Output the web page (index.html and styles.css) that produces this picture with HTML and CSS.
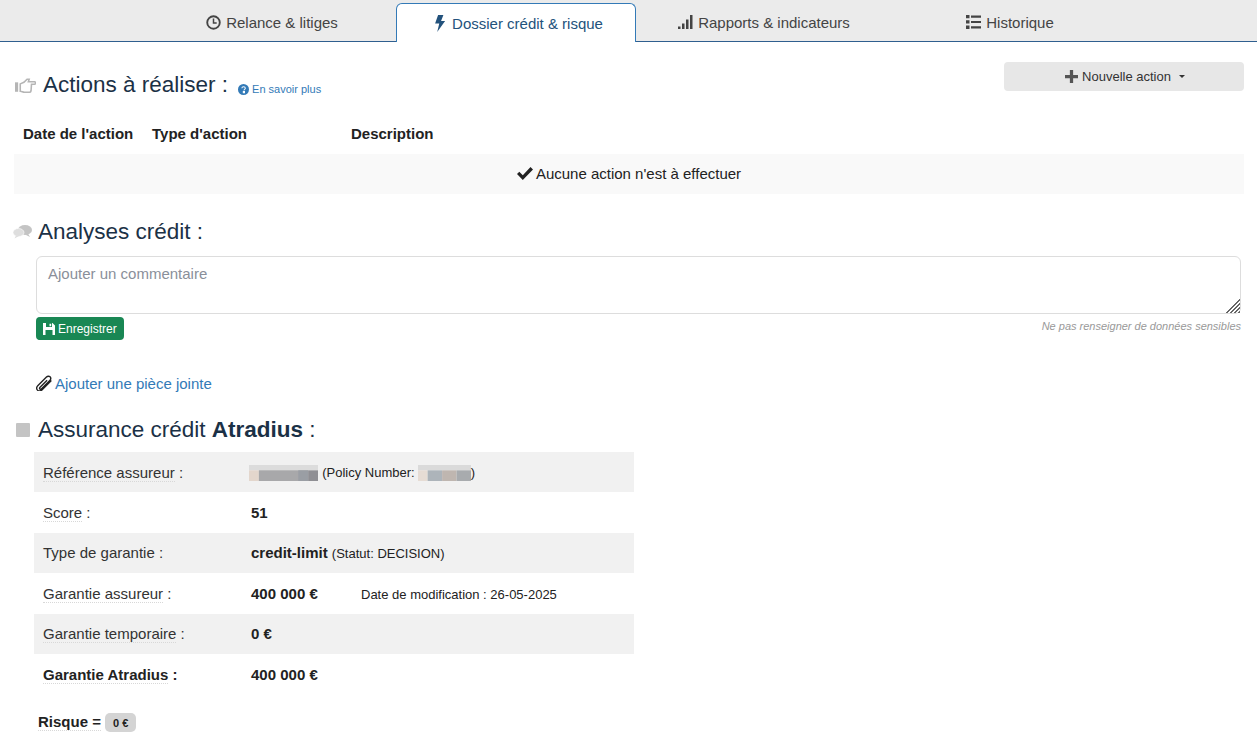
FILE: index.html
```html
<!DOCTYPE html>
<html lang="fr">
<head>
<meta charset="utf-8">
<title>Dossier crédit &amp; risque</title>
<link rel="stylesheet" href="styles.css">
</head>
<body>
<nav class="tabs">
  <a class="tab tab-a tab-first"><svg class="ti" viewBox="0 0 16 16" width="15" height="15"><circle cx="8" cy="8" r="6.700" fill="none" stroke="currentColor" stroke-width="2"/><path d="M8 3.800v4.800h3.400" fill="none" stroke="currentColor" stroke-width="1.600"/></svg>Relance &amp; litiges</a>
  <a class="tab tab-a active"><svg class="ti" viewBox="0 0 12 16" width="14" height="17"><path d="M4.200 0h5L7 5.600h3.800L3.400 16l1.900-8H1.400z" fill="currentColor"/></svg>Dossier crédit &amp; risque</a>
  <a class="tab tab-b"><svg class="ti narrow" viewBox="0 0 15 14" width="15" height="14"><path d="M0 11.500h2.500V14H0zM4 8.500h2.500V14H4zM8 4.500h2.500V14H8zM12 0h2.500v14H12z" fill="currentColor"/></svg>Rapports &amp; indicateurs</a>
  <a class="tab tab-a"><svg class="ti narrow" viewBox="0 0 15 14" width="15" height="14"><path d="M0 0h3.500v3.300H0zM0 5.300h3.500v3.300H0zM0 10.600h3.500v3.300H0zM5 .6h10v2.200H5zM5 5.900h10v2.200H5zM5 11.200h10v2.200H5z" fill="currentColor"/></svg>Historique</a>
</nav>

<main class="page">
  <section class="actions">
    <div class="actions-head">
      <h2 class="title title-actions">
        <svg class="hicon" viewBox="0 0 20 15" width="21" height="16"><path d="M0 4h3v9H0z" fill="#b5b5b5"/><path d="M5 5.500 8.500 4l3-3h2l-.8 2.500h6c1 0 1 2.300 0 2.300h-3l-.4 6.200c-.2 1-.8 1.500-1.600 1.500H9c-1.500 0-2.500-1-4-1z" fill="none" stroke="#b5b5b5" stroke-width="1.500"/></svg>
        <span>Actions à réaliser :</span>
        <a class="more"><svg viewBox="0 0 12 12" width="11" height="11"><circle cx="6" cy="6" r="6" fill="#337ab7"/><path d="M4.200 4.600c0-2.200 3.800-2.200 3.800 0 0 1.300-1.500 1.200-1.500 2.400M5.800 8.200h1.300v1.300H5.800z" fill="none" stroke="#fff" stroke-width="1.100"/></svg> En savoir plus</a>
      </h2>
      <button class="new-action"><svg viewBox="0 0 12 12" width="13" height="13"><path d="M4.500 0h3v4.500H12v3H7.500V12h-3V7.500H0v-3h4.500z" fill="#555"/></svg> Nouvelle action <span class="caret"></span></button>
    </div>
    <div class="action-cols">
      <span class="col1">Date de l'action</span>
      <span class="col2">Type d'action</span>
      <span>Description</span>
    </div>
    <div class="empty"><svg viewBox="0 0 16 13" width="16" height="13"><path d="M0 7l2.300-2.300 3.500 3.500L13.500 0 16 2.500 5.800 13z" fill="#222"/></svg> Aucune action n'est à effectuer</div>
  </section>

  <section class="analyses">
    <h2 class="title title-analyses">
      <svg class="hicon" viewBox="0 0 19 14" width="19" height="14"><ellipse cx="12" cy="5" rx="7" ry="5" fill="#c4c4c4"/><path d="M15 8.500l2 3.500-5-2.500z" fill="#c4c4c4"/><ellipse cx="5.500" cy="7.500" rx="5.500" ry="4" fill="#dedede" stroke="#fff" stroke-width=".6"/><path d="M3 10.500l-1.500 3 4.500-2.500z" fill="#dedede"/></svg>
      <span>Analyses crédit :</span>
    </h2>
    <div class="comment">
      <div class="area">
        <textarea placeholder="Ajouter un commentaire"></textarea>
        <span class="grip"></span>
      </div>
      <div class="comment-foot">
        <button class="save"><svg viewBox="0 0 12 12" width="12" height="12"><path d="M0 0h9.500L12 2.500V12H0zM3 0v4h6V0zM6.500.8h1.700v2.400H6.500zM2.500 7v5h7V7z" fill="#fff" fill-rule="evenodd"/></svg> Enregistrer</button>
        <small class="hint">Ne pas renseigner de données sensibles</small>
      </div>
      <a class="attach"><svg viewBox="1.500 0.500 13 13" width="16" height="16"><path d="M14 5 6.500 12.500c-1.200 1.200-3 1.200-3.800.3s-.8-2.500.4-3.700L10 2.200c.9-.9 2.200-.9 2.900-.2s.7 2-.2 2.900L6 11.600c-.5.500-1.100.5-1.400.2s-.3-.9.200-1.400L10.500 4.700" fill="none" stroke="#222" stroke-width="1.100"/></svg> Ajouter une pièce jointe</a>
    </div>
  </section>

  <section class="assurance">
    <h2 class="title title-assurance"><span class="square"></span><span>Assurance crédit <strong>Atradius</strong> :</span></h2>
    <table class="facts">
      <tr>
        <td class="lab"><span class="dot">Référence assureur</span> :</td>
        <td class="ref"><svg class="blur b1" viewBox="0 0 14 3" width="69" height="16" preserveAspectRatio="none"><path d="M0 0h14v1H0z" fill="#dcdcdc"/><path d="M0 1h2v2H0z" fill="#e3d6cc"/><path d="M2 1h10v2H2z" fill="#a8a8aa"/><path d="M10 1h2v2h-2z" fill="#9a9ea4"/><path d="M12 1h2v2h-2z" fill="#8f8f94"/></svg> <span class="small">(Policy Number:</span> <svg class="blur b2" viewBox="0 0 11 3" width="53" height="16" preserveAspectRatio="none"><path d="M0 0h11v1H0z" fill="#dadada"/><path d="M0 1h2v2H0z" fill="#e6dcd4"/><path d="M2 1h3v2H2z" fill="#adb4ba"/><path d="M5 1h3v2H5z" fill="#bfb6b0"/><path d="M8 1h3v2H8z" fill="#a8abae"/></svg><span class="small">)</span></td>
      </tr>
      <tr><td class="lab"><span class="dot">Score</span> :</td><td><b>51</b></td></tr>
      <tr><td class="lab">Type de garantie :</td><td><b>credit-limit</b> <span class="small">(Statut: DECISION)</span></td></tr>
      <tr><td class="lab"><span class="dot">Garantie assureur</span> :</td><td><b class="val">400 000 €</b><span class="small">Date de modification : 26-05-2025</span></td></tr>
      <tr><td class="lab"><span class="dot">Garantie temporaire</span> :</td><td><b>0 €</b></td></tr>
      <tr><td class="lab"><b><span class="dot">Garantie Atradius</span> :</b></td><td><b>400 000 €</b></td></tr>
    </table>
    <p class="risk"><b class="dot">Risque =</b> <span class="badge">0 €</span></p>
  </section>
</main>
</body>
</html>
```
FILE: styles.css
```css
* { box-sizing: border-box; }
html, body { margin: 0; padding: 0; height: 739px; overflow: hidden; }
body { background: #fff; font-family: "Liberation Sans", Arial, sans-serif; font-size: 15px; color: #222; }

.tabs { display: flex; height: 42px; padding-left: 156px; background: #ebebeb; border-bottom: 1px solid #2f5f8f; }
.tab { display: flex; align-items: center; justify-content: center; gap: 5px; height: 41px; padding-top: 3px; font-size: 15px; color: #444; }
.tab-a { width: 240px; }
.tab-b { width: 254px; padding-left: 2px; }
.tab-first { padding-right: 8px; }
.tab.active { margin-top: 3px; height: 39px; padding-top: 0; padding-left: 4px; background: #fff; color: #23527c; border: 1px solid #337ab7; border-bottom: 0; border-radius: 6px 6px 0 0; position: relative; }
.tab.active::after { content: ""; position: absolute; left: 0; right: 0; bottom: -1px; height: 1px; background: #fff; }
.ti { flex: none; }

.page { padding: 0 13px 0 14px; }
.title { margin: 0; display: flex; align-items: center; font-size: 22.500px; font-weight: 400; color: #1b3146; line-height: 28px; }
.hicon { flex: none; margin-right: 7px; }

.actions-head { display: flex; justify-content: space-between; align-items: flex-start; padding-top: 20px; }
.title-actions { padding-top: 9px; margin-top: -3px; }
.title-actions .hicon { margin: 2px 7px 0 1px; }
.more { display: inline-flex; align-items: center; gap: 3px; font-size: 11px; color: #337ab7; margin: 7px 0 -2px 10px; }
.new-action { display: flex; align-items: center; justify-content: center; gap: 4px; width: 240px; height: 29px; border: 0; border-radius: 4px; background: #e7e7e7; font: 13px/1 "Liberation Sans", Arial, sans-serif; color: #333; padding: 0 0 0 2px; }
.caret { width: 0; height: 0; margin-left: 4px; border: 3px solid transparent; border-top-color: #333; border-bottom: 0; }

.action-cols { display: flex; margin-top: 17px; height: 36px; padding: 7px 0 0 9px; font-weight: 700; font-size: 15px; color: #222; }
.col1 { width: 129px; }
.col2 { width: 199px; }
.empty { display: flex; align-items: center; justify-content: center; gap: 3px; height: 40px; padding-bottom: 1px; background: #f9f9f9; font-size: 15px; }

.analyses { margin-top: 24px; }
.title-analyses .hicon { margin-right: 6px; margin-left: -1px; }
.comment { margin: 10px 3px 0 22px; }
.area { position: relative; }
.area textarea { display: block; width: 100%; height: 58px; padding: 6px 11px; border: 1px solid #ddd; border-radius: 6px; background: #fff; font: 15px/1.4 "Liberation Sans", Arial, sans-serif; color: #333; resize: none; }
.area textarea::placeholder { color: #8a8f9a; opacity: 1; }
.grip { position: absolute; right: 1px; bottom: 1px; width: 16px; height: 16px; background: repeating-linear-gradient(135deg, transparent 0 1.500px, #666 1.500px 2.800px); clip-path: polygon(100% 0, 100% 100%, 0 100%); }
.comment-foot { display: flex; justify-content: space-between; align-items: flex-start; margin-top: 3px; }
.save { display: flex; align-items: center; gap: 3px; height: 23px; padding: 0 7px 0 7px; border: 0; border-radius: 4px; background: #198754; color: #fff; font: 12px/1 "Liberation Sans", Arial, sans-serif; }
.hint { font-size: 11px; font-style: italic; color: #999; margin-top: 3px; }
.attach { display: flex; align-items: center; gap: 3px; margin-top: 34px; font-size: 15px; color: #337ab7; height: 18px; }

.assurance { margin-top: 24px; }
.square { width: 14px; height: 14px; margin: 0 8px 0 2px; background: #c4c4c4; border-radius: 1px; flex: none; }
.facts { width: 600px; margin: 8px 0 0 20px; border-collapse: collapse; table-layout: fixed; }
.facts tr { height: 40.400px; }
.facts tr:nth-child(odd) { background: #f1f1f1; }
.facts td { padding: 0 0 0 9px; vertical-align: middle; font-size: 15px; color: #222; }
.facts td.lab { width: 208px; color: #333; }
.facts b { color: #222; }
.dot { border-bottom: 1px dotted #d8d8d8; }
.small { font-size: 13px; color: #222; }
.val { display: inline-block; width: 110px; }
.blur { vertical-align: -4px; }
.b1 { margin-left: -2px; }
.b2 { margin-left: -1px; }
.risk { margin: 19px 0 0 24px; font-size: 15px; }
.badge { display: inline-block; height: 19px; padding: 0 8px; border-radius: 5px; background: #d4d4d4; font-size: 11px; font-weight: 700; line-height: 20px; }
```
